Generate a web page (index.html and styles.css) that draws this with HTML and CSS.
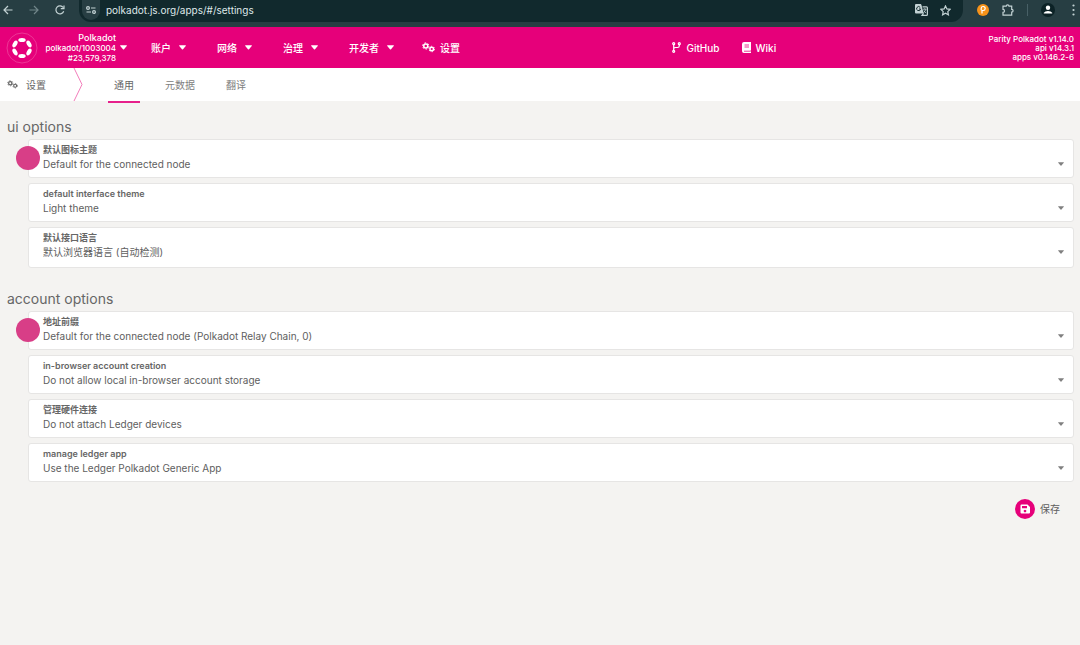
FILE: index.html
```html
<!DOCTYPE html>
<html lang="zh-CN">
<head>
<meta charset="utf-8">
<meta name="viewport" content="width=device-width, initial-scale=1">
<title>Polkadot 设置</title>
<link rel="stylesheet" href="styles.css">
</head>
<body>
<svg class="defs" aria-hidden="true">
  <symbol id="caret" viewBox="0 0 8 5"><path d="M.6 0h6.8q.8.1.3.8L4.6 4.6q-.6.6-1.200 0L.3.8Q-.2.1.6 0z"/></symbol>
  <symbol id="gears" viewBox="0 0 26 22">
    <g fill="none" stroke="currentColor">
      <circle cx="7.500" cy="8" r="4" stroke-width="3"/>
      <circle cx="7.500" cy="8" r="6.300" stroke-width="2" stroke-dasharray="3.300 3.300"/>
      <circle cx="19.500" cy="14" r="3.600" stroke-width="2.800"/>
      <circle cx="19.500" cy="14" r="5.500" stroke-width="1.800" stroke-dasharray="2.880 2.880"/>
    </g>
  </symbol>
</svg>

<div class="browser">
  <button class="tool" aria-label="后退"><svg width="10" height="10" viewBox="0 0 10 10"><path d="M9.500 5H1M5 1L1 5l4 4"/></svg></button>
  <button class="tool tool-off" aria-label="前进"><svg width="10" height="10" viewBox="0 0 10 10"><path d="M.5 5H9M5 1l4 4-4 4"/></svg></button>
  <button class="tool" aria-label="刷新"><svg width="10" height="10" viewBox="0 0 10 10"><path d="M8.700 6.200A4 4 0 1 1 8.200 2.500M9 .5v3.200H5.800"/></svg></button>
  <div class="omnibox">
    <button class="site" aria-label="网站信息"><svg width="10" height="8" viewBox="0 0 10 8"><circle cx="2" cy="2" r="1.400"/><path d="M5 2h4.500M.5 6H5"/><circle cx="8" cy="6" r="1.400"/></svg></button>
    <input class="url" type="text" aria-label="网址" value="polkadot.js.org/apps/#/settings">
    <button class="tool" aria-label="翻译网页"><svg width="13" height="12" viewBox="0 0 13 12"><path class="solid" d="M1 0h5l1 2.500H1zM0 1q0-1 1-1h5l2.800 9.500H1q-1 0-1-1z"/><path d="M7.500 2.800h4q.9 0 .9.900v6.800q0 .9-.9.900H7l1.500-2"/><path class="cut" d="M5.200 3.400A2 2 0 1 0 5.600 5H4"/><path class="thin" d="M8 5.200h3.600M9.800 4.200v1M8.400 8.700q2-1 2.300-3.400M8.900 6.500q.8 1.800 2.200 2.500"/></svg></button>
    <button class="tool" aria-label="收藏"><svg width="11" height="11" viewBox="0 0 11 11"><path d="M5.500.9l1.400 3 3.300.4-2.400 2.300.6 3.300-2.900-1.600-2.900 1.600.6-3.300L.8 4.300l3.300-.4z"/></svg></button>
  </div>
  <div class="extensions">
    <button class="tool" aria-label="钱包扩展"><svg width="12" height="12" viewBox="0 0 12 12"><circle class="orange" cx="6" cy="6" r="6"/><path class="white" d="M4.200 6.200V4.300a2 2 0 1 1 2 2.200H5v3"/></svg></button>
    <button class="tool" aria-label="扩展程序"><svg width="12" height="12" viewBox="0 0 12 12"><path d="M1 2.200h3.200a1.400 1.400 0 0 1 2.800 0h2.700v3.200a1.400 1.400 0 0 1 0 2.800v3H1V8.400a1.500 1.500 0 0 0 0-3z"/></svg></button>
    <span class="divider"></span>
    <button class="tool" aria-label="个人资料"><svg width="14" height="14" viewBox="0 0 14 14"><circle class="dark" cx="7" cy="7" r="7"/><circle class="person" cx="7" cy="4.800" r="2.200"/><path class="person" d="M2.800 10.500V9.700Q4 7.900 7 7.900t4.200 1.800v.8z"/></svg></button>
    <button class="tool more" aria-label="更多"><svg width="3" height="12" viewBox="0 0 3 12"><g class="solid"><circle cx="1.500" cy="1.500" r="1.100"/><circle cx="1.500" cy="6" r="1.100"/><circle cx="1.500" cy="10.500" r="1.100"/></g></svg></button>
  </div>
</div>

<header class="topbar">
  <button class="chain">
    <svg class="logo" width="32" height="32" viewBox="0 0 32 32"><circle cx="16" cy="16" r="15" fill="none" stroke="#f05aa8" stroke-width=".6"/><g fill="#fff"><ellipse cx="16" cy="8" rx="3.700" ry="2.100"/><ellipse cx="16" cy="24" rx="3.700" ry="2.100"/><ellipse cx="9" cy="12" rx="3.700" ry="2.100" transform="rotate(-60 9 12)"/><ellipse cx="23" cy="12" rx="3.700" ry="2.100" transform="rotate(60 23 12)"/><ellipse cx="9" cy="20" rx="3.700" ry="2.100" transform="rotate(60 9 20)"/><ellipse cx="23" cy="20" rx="3.700" ry="2.100" transform="rotate(-60 23 20)"/></g></svg>
    <span class="chain-info"><span class="chain-name">Polkadot</span><span>polkadot/1003004</span><span>#23,579,378</span></span>
    <svg class="caret"><use href="#caret"/></svg>
  </button>
  <nav class="menu" aria-label="主菜单">
    <button class="menu-item">账户<svg class="caret"><use href="#caret"/></svg></button>
    <button class="menu-item">网络<svg class="caret"><use href="#caret"/></svg></button>
    <button class="menu-item">治理<svg class="caret"><use href="#caret"/></svg></button>
    <button class="menu-item">开发者<svg class="caret"><use href="#caret"/></svg></button>
    <a class="menu-item icon-item" href="#/settings"><svg class="gears"><use href="#gears"/></svg>设置</a>
  </nav>
  <div class="external">
    <a class="menu-item icon-item" href="#github"><svg width="9" height="11" viewBox="0 0 9 11" fill="none" stroke="currentColor" stroke-width="1.200"><circle cx="1.700" cy="1.700" r="1"/><circle cx="7.300" cy="1.700" r="1"/><circle cx="1.700" cy="9.300" r="1"/><path d="M1.700 2.700v5.600M7.300 2.700v1q0 1.800-1.800 1.800H3.500q-1.800 0-1.800 1.500"/></svg>GitHub</a>
    <a class="menu-item icon-item" href="#wiki"><svg width="9" height="11" viewBox="0 0 9 11"><path fill="currentColor" d="M2 0h7v8l-.5.5v1l.5.5v1H2Q0 11 0 9V2Q0 0 2 0z"/><path d="M2.500 3h4.500M2.500 5h4.500M2 9.200h6.200" stroke="#e6007a" stroke-width=".8"/></svg>Wiki</a>
  </div>
  <div class="versions"><span>Parity Polkadot v1.14.0</span><span>api v14.3.1</span><span>apps v0.146.2-6</span></div>
</header>

<nav class="tabs" aria-label="设置">
  <div class="tabs-title"><svg class="gears gears-small"><use href="#gears"/></svg>设置</div>
  <svg class="tabs-arrow" width="10" height="33" viewBox="0 0 10 33"><path d="M1 0l8 16.500L1 33"/></svg>
  <a class="tab tab-active" href="#/settings">通用</a>
  <a class="tab" href="#/settings/metadata">元数据</a>
  <a class="tab" href="#/settings/i18n">翻译</a>
</nav>

<main class="content">
  <section class="group">
    <h1>ui options</h1>
    <div class="card">
      <span class="dot"></span>
      <label for="icon">默认图标主题</label>
      <div class="field"><select id="icon"><option>Default for the connected node</option></select><svg class="arrow"><use href="#caret"/></svg></div>
    </div>
    <div class="card">
      <label for="theme">default interface theme</label>
      <div class="field"><select id="theme"><option>Light theme</option></select><svg class="arrow"><use href="#caret"/></svg></div>
    </div>
    <div class="card card-cjk">
      <label for="lang">默认接口语言</label>
      <div class="field"><select id="lang"><option>默认浏览器语言 (自动检测)</option></select><svg class="arrow"><use href="#caret"/></svg></div>
    </div>
  </section>
  <section class="group">
    <h1>account options</h1>
    <div class="card">
      <span class="dot"></span>
      <label for="prefix">地址前缀</label>
      <div class="field"><select id="prefix"><option>Default for the connected node (Polkadot Relay Chain, 0)</option></select><svg class="arrow"><use href="#caret"/></svg></div>
    </div>
    <div class="card">
      <label for="storage">in-browser account creation</label>
      <div class="field"><select id="storage"><option>Do not allow local in-browser account storage</option></select><svg class="arrow"><use href="#caret"/></svg></div>
    </div>
    <div class="card">
      <label for="hardware">管理硬件连接</label>
      <div class="field"><select id="hardware"><option>Do not attach Ledger devices</option></select><svg class="arrow"><use href="#caret"/></svg></div>
    </div>
    <div class="card">
      <label for="ledger">manage ledger app</label>
      <div class="field"><select id="ledger"><option>Use the Ledger Polkadot Generic App</option></select><svg class="arrow"><use href="#caret"/></svg></div>
    </div>
  </section>
  <div class="actions">
    <button class="save"><svg width="20" height="20" viewBox="0 0 20 20"><circle cx="10" cy="10" r="10" fill="#e6007a"/><path fill="#fff" fill-rule="evenodd" d="M6.500 5.500h6l2.500 2.500v5.500q0 1-1 1H6.500q-1 0-1-1v-7q0-1 1-1zM7 7v2.300h5V7zm3 3.700a1.300 1.300 0 1 0 .01 0z"/></svg>保存</button>
  </div>
</main>
</body>
</html>
```
FILE: styles.css
```css
* { box-sizing: border-box; }

body {
  margin: 0;
  min-height: 100vh;
  background: #f4f3f1;
  color: #5e5e5e;
  font: 10px/14px Inter, "Noto Sans CJK SC", sans-serif;
}

button, input, select {
  margin: 0;
  padding: 0;
  border: 0;
  background: none;
  color: inherit;
  font: inherit;
}

a { color: inherit; text-decoration: none; }
svg { display: block; flex: none; }
.defs { position: absolute; width: 0; height: 0; }

/* browser toolbar */
.browser {
  display: flex;
  align-items: flex-start;
  gap: 16px;
  height: 27px;
  padding: 0 1px 0 3px;
  background: #273e43;
  color: #c3d2d4;
}

.tool { display: flex; align-items: center; justify-content: center; height: 20px; }
.tool svg, .site svg { fill: none; stroke: currentColor; stroke-width: 1.2; }
.tool-off { color: #71868a; }
.more { width: 11px; }
.browser .solid { fill: currentColor; stroke: none; }
.browser .cut { stroke: #11292d; stroke-width: 1; }
.browser .thin { stroke-width: 0.8; }
.browser .orange { fill: #f7931a; stroke: none; }
.browser .white { stroke: #fff; }
.browser .dark { fill: #0c2226; stroke: none; }
.browser .person { fill: #fff; stroke: none; }

.omnibox {
  display: flex;
  flex: 1;
  gap: 12px;
  height: 22px;
  margin: 0 -2px;
  padding: 0 12px 0 3px;
  border-radius: 0 0 12px 12px;
  background: #11292d;
}

.site {
  display: flex;
  align-items: center;
  justify-content: center;
  width: 18px;
  height: 20px;
  border-radius: 0 0 9px 9px;
  background: #273e43;
}

.url { flex: 1; min-width: 0; height: 20px; margin-left: -6px; color: #dfe8e9; }
.extensions { display: flex; align-items: center; gap: 13px; }
.divider { width: 1px; height: 12px; background: #486066; }

/* pink header */
.topbar {
  display: flex;
  align-items: center;
  height: 41px;
  padding: 0 6px;
  background: #e6007a;
  color: #fff;
}

.chain { display: flex; align-items: center; gap: 4px; margin-right: 24px; }
.chain-info {
  display: flex;
  flex-direction: column;
  width: 74px;
  text-align: right;
  font-size: 8px;
  line-height: 10px;
  font-weight: 500;
  white-space: nowrap;
}
.chain-name { font-size: 9px; }
.caret { width: 7px; height: 5px; fill: currentColor; }

.menu { display: flex; align-items: center; gap: 28px; }
.menu-item { display: flex; align-items: center; font-weight: 500; white-space: nowrap; }
.menu-item .caret { margin: 0 3px 0 8px; }
.menu .icon-item { margin-left: -3px; }
.icon-item { gap: 5px; }
.gears { width: 13px; height: 11px; }

.external { display: flex; gap: 22px; margin: 0 auto; }
.versions {
  display: flex;
  flex-direction: column;
  padding-top: 2px;
  text-align: right;
  font-size: 8px;
  line-height: 9px;
  font-weight: 500;
}

/* tabs */
.tabs {
  display: flex;
  align-items: stretch;
  height: 33px;
  padding-left: 7px;
  background: #fff;
  color: #808080;
}

.tabs-title { display: flex; align-items: center; gap: 8px; margin-right: 27px; color: #666; }
.gears-small { width: 11px; height: 9px; }
.tabs-arrow { margin-right: 25px; fill: none; stroke: #f27dba; }
.tab {
  display: flex;
  align-items: center;
  height: 35px;
  margin-right: 19px;
  padding: 0 6px;
  border-bottom: 2px solid transparent;
}
.tab-active { border-color: #e6208b; color: #666; }

/* settings */
.content { padding: 18px 6px; }
.group { margin-bottom: 17px; }
.group + .group { margin-top: 23px; }

h1 { margin: 0; padding-left: 1px; font-size: 14px; line-height: 16px; font-weight: 400; color: #666; }

.card {
  position: relative;
  margin: 5px 0 0 22px;
  padding: 3px 9px 6px 14px;
  border: 1px solid #e6e5e4;
  border-radius: 3px;
  background: #fff;
}

h1 + .card { margin-top: 4px; }
.card-cjk { padding-bottom: 8px; }
.card label { display: block; font-size: 9px; line-height: 14px; font-weight: 600; color: #666; }
.field { display: flex; align-items: center; gap: 8px; }
.field select { flex: 1; min-width: 0; height: 14px; appearance: none; }
.arrow { width: 6px; height: 4px; fill: #808080; }

.dot {
  position: absolute;
  top: 6px;
  left: -13px;
  width: 24px;
  height: 24px;
  border-radius: 50%;
  background: #d83e87;
}

.actions { display: flex; justify-content: flex-end; padding-right: 14px; }
.save { display: flex; align-items: center; gap: 5px; }
```
